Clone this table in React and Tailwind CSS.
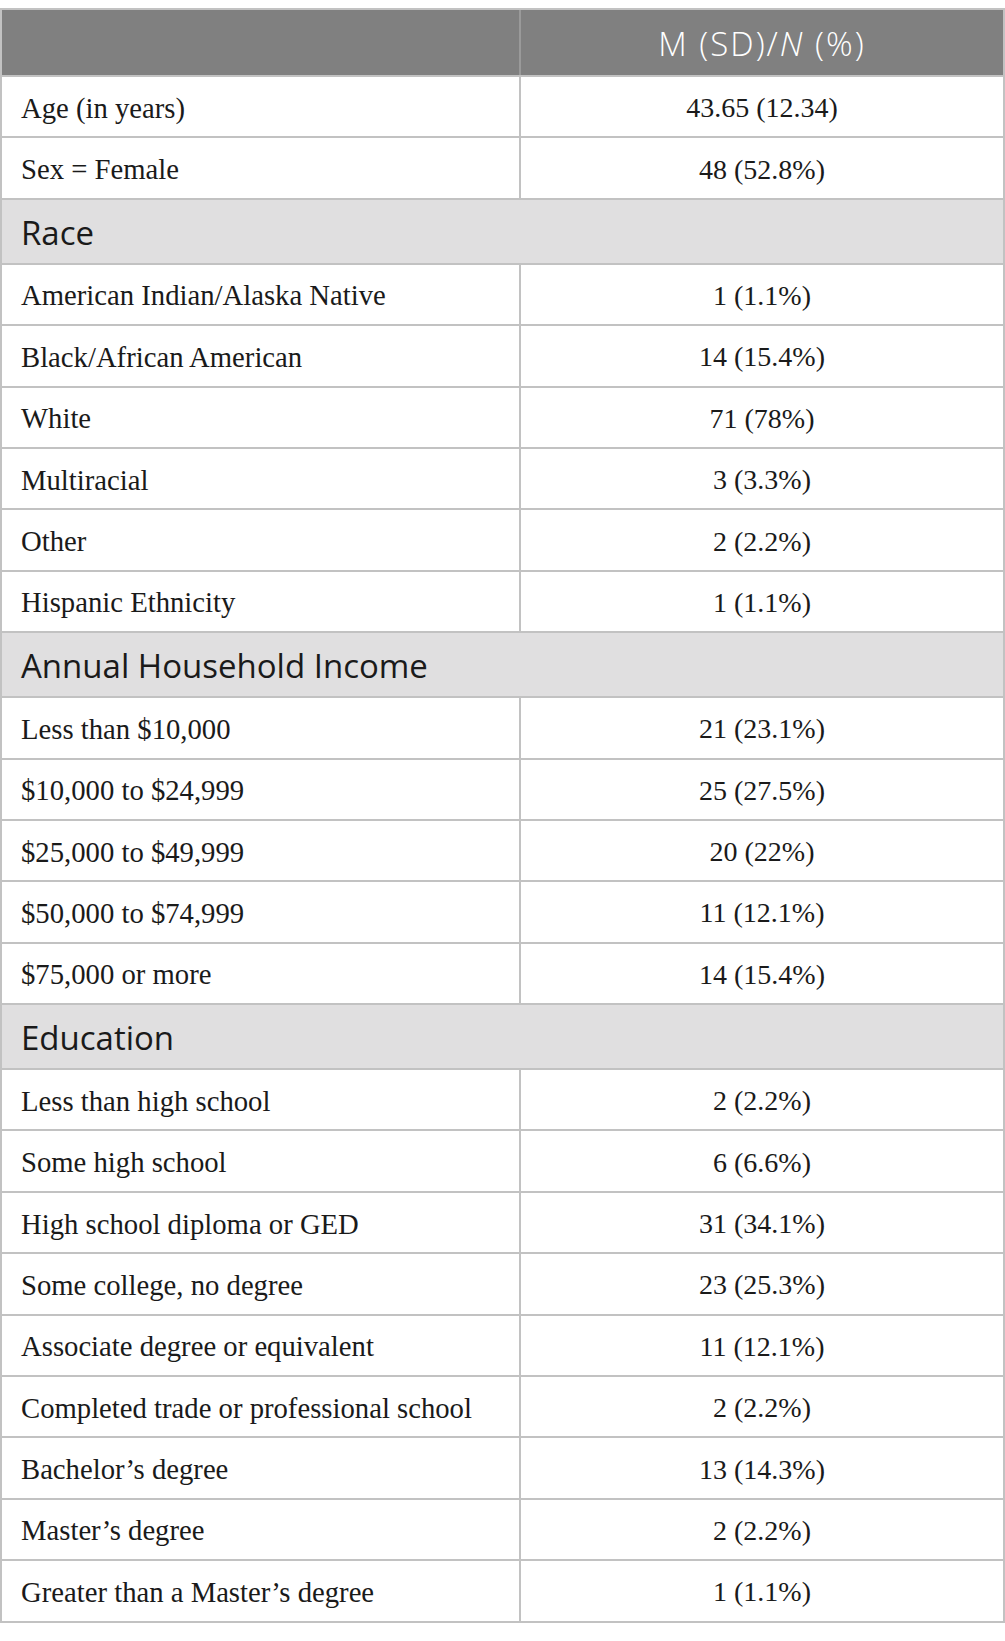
import React from "react";

const rows = [
  { t: "r", a: "Age (in years)", b: "43.65 (12.34)" },
  { t: "r", a: "Sex = Female", b: "48 (52.8%)" },
  { t: "s", a: "Race" },
  { t: "r", a: "American Indian/Alaska Native", b: "1 (1.1%)" },
  { t: "r", a: "Black/African American", b: "14 (15.4%)" },
  { t: "r", a: "White", b: "71 (78%)" },
  { t: "r", a: "Multiracial", b: "3 (3.3%)" },
  { t: "r", a: "Other", b: "2 (2.2%)" },
  { t: "r", a: "Hispanic Ethnicity", b: "1 (1.1%)" },
  { t: "s", a: "Annual Household Income" },
  { t: "r", a: "Less than $10,000", b: "21 (23.1%)" },
  { t: "r", a: "$10,000 to $24,999", b: "25 (27.5%)" },
  { t: "r", a: "$25,000 to $49,999", b: "20 (22%)" },
  { t: "r", a: "$50,000 to $74,999", b: "11 (12.1%)" },
  { t: "r", a: "$75,000 or more", b: "14 (15.4%)" },
  { t: "s", a: "Education" },
  { t: "r", a: "Less than high school", b: "2 (2.2%)" },
  { t: "r", a: "Some high school", b: "6 (6.6%)" },
  { t: "r", a: "High school diploma or GED", b: "31 (34.1%)" },
  { t: "r", a: "Some college, no degree", b: "23 (25.3%)" },
  { t: "r", a: "Associate degree or equivalent", b: "11 (12.1%)" },
  { t: "r", a: "Completed trade or professional school", b: "2 (2.2%)" },
  { t: "r", a: "Bachelor\u2019s degree", b: "13 (14.3%)" },
  { t: "r", a: "Master\u2019s degree", b: "2 (2.2%)" },
  { t: "r", a: "Greater than a Master\u2019s degree", b: "1 (1.1%)" },
];

export default function App() {
  return (
    <div className="w-[1005px] h-[1641px] bg-white pt-[8px]">
      <div className="border-2 border-[#c2c2c2] bg-white">
        <div className="flex h-[67px] border-b-2 border-[#c2c2c2] bg-[#808080]">
          <div className="w-[519px] border-r-2 border-[#9a9a9a]" />
          <div className="flex-1 flex items-center justify-center text-white text-[33px] tracking-[2px] font-light font-['Open_Sans',sans-serif] pt-[2px]">
            <span>
              M (SD)/<i>N</i> (%)
            </span>
          </div>
        </div>
        {rows.map((r, i) => {
          const last = i === rows.length - 1;
          if (r.t === "s") {
            return (
              <div
                key={i}
                className="flex items-center h-[65px] border-b-2 border-[#c2c2c2] bg-[#e0dfe0] pl-[19px] pt-[3px] text-[33px] text-[#1a1a1a] font-['Open_Sans',sans-serif]"
              >
                {r.a}
              </div>
            );
          }
          return (
            <div
              key={i}
              className={
                last
                  ? "flex h-[59.4px] pt-[3px] text-[28px] text-[#1a1a1a] font-['Liberation_Serif',serif]"
                  : "flex h-[61.4px] pt-[3px] border-b-2 border-[#c2c2c2] text-[28px] text-[#1a1a1a] font-['Liberation_Serif',serif]"
              }
            >
              <div className="w-[519px] -mt-[3px] pt-[3px] border-r-2 border-[#c2c2c2] flex items-center pl-[19px] text-[28.7px]">
                {r.a}
              </div>
              <div className="flex-1 flex items-center justify-center">{r.b}</div>
            </div>
          );
        })}
      </div>
    </div>
  );
}
